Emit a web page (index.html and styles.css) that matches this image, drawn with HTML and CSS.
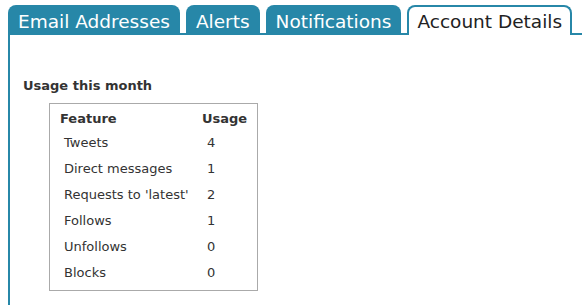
FILE: index.html
```html
<!DOCTYPE html>
<html lang="en">
<head>
  <meta charset="UTF-8">
  <title>Account Details</title>
  <link rel="stylesheet" href="styles.css">
</head>
<body>
  <ul class="tabs">
    <li class="tab">Email Addresses</li>
    <li class="tab">Alerts</li>
    <li class="tab">Notifications</li>
    <li class="tab active">Account Details</li>
  </ul>
  <div class="panel">
    <h3>Usage this month</h3>
    <table class="usage">
      <thead>
        <tr>
          <th class="col-feature">Feature</th>
          <th class="col-usage">Usage</th>
        </tr>
      </thead>
      <tbody>
        <tr><td>Tweets</td><td>4</td></tr>
        <tr><td>Direct messages</td><td>1</td></tr>
        <tr><td>Requests to 'latest'</td><td>2</td></tr>
        <tr><td>Follows</td><td>1</td></tr>
        <tr><td>Unfollows</td><td>0</td></tr>
        <tr><td>Blocks</td><td>0</td></tr>
      </tbody>
    </table>
  </div>
</body>
</html>
```

FILE: styles.css
```css
body {
  font-family: "DejaVu Sans", Verdana, sans-serif;
  margin: 0;
  padding: 0 0 0 8px;
  background-color: #fff;
  color: #333;
}
.tabs {
  display: flex;
  align-items: flex-end;
  gap: 6px;
  list-style: none;
  margin: 5px 0 0 0;
  padding: 0;
}
.tab {
  font-size: 18.5px;
  line-height: 21px;
  padding: 6px 10px 1px;
  background-color: #2787a8;
  color: #fff;
  border-radius: 8px 8px 0 0;
  white-space: nowrap;
}
.tab.active {
  position: relative;
  z-index: 1;
  background-color: #fff;
  color: #222;
  border: 2px solid #2787a8;
  border-bottom: none;
  padding: 4px 8px 3px;
  margin-bottom: -2px;
}
.panel {
  box-sizing: border-box;
  min-height: calc(100vh - 33px);
  border-left: 2px solid #2787a8;
  border-top: 2px solid #2787a8;
  padding: 43px 0 0 13px;
}
.panel h3 {
  font-size: 13px;
  line-height: 16px;
  margin: 0 0 9px 0;
}
.usage {
  margin-left: 26px;
  width: 209px;
  table-layout: fixed;
  border: 1px solid #aaa;
  border-collapse: separate;
  border-spacing: 0;
  padding: 0 0 4px 0;
  font-size: 13px;
  line-height: 16px;
}
.usage th {
  text-align: left;
  padding: 7px 10px 3px;
}
.usage .col-feature {
  width: 122px;
}
.usage td {
  padding: 5px 0 5px 14px;
}
.usage td + td {
  padding-left: 15px;
}
```
